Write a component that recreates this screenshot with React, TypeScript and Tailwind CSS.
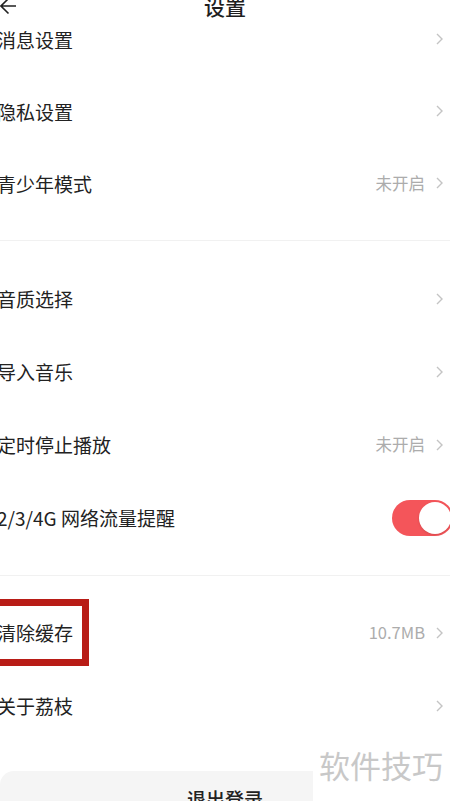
import React from 'react';

const font = { fontFamily: '"Noto Sans CJK SC", "Noto Sans", sans-serif' };

function Chevron() {
  return (
    <svg width="9" height="14" viewBox="0 0 9 14" className="shrink-0">
      <polyline points="2,2 7,7 2,12" fill="none" stroke="#c4c4c4" strokeWidth="1.4" />
    </svg>
  );
}

function Row({ label, value, h = 'h-[73px]', chevron = true, toggle = false, children }: {
  label: string;
  value?: string;
  h?: string;
  chevron?: boolean;
  toggle?: boolean;
  children?: React.ReactNode;
}) {
  return (
    <div className={`relative flex items-center justify-between ${h}`}>
      <span className="ml-[-3px] text-[19px] leading-none text-[#222]">{label}</span>
      {toggle ? (
        <div className="mr-[-3px] flex h-[36px] w-[61px] items-center justify-end rounded-full bg-[#f4555a] pr-[2px]">
          <div className="h-[32px] w-[32px] rounded-full bg-white shadow-sm" />
        </div>
      ) : (
        <div className="mr-[6px] flex items-center gap-[10px]">
          {value && <span className="text-[16.5px] leading-none text-[#acacac]">{value}</span>}
          {chevron && <Chevron />}
        </div>
      )}
      {children}
    </div>
  );
}

export default function App() {
  return (
    <div className="relative h-[801px] w-full overflow-hidden bg-white" style={font}>
      {/* header */}
      <div className="relative z-10 mb-[-17px] flex h-[20px] items-center justify-center">
        <svg width="18" height="18" viewBox="0 0 18 18" className="absolute left-0 top-[-2px]">
          <path d="M16 8H1M8.5 0.5L1 8l7.5 7.5" fill="none" stroke="#222" strokeWidth="1.6" />
        </svg>
        <span className="mt-[-7px] text-[21px] font-medium leading-none text-[#1f1f1f]">设置</span>
      </div>

      <div className="flex flex-col">
        <Row label="消息设置" h="h-[72px]" />
        <Row label="隐私设置" h="h-[72px]" />
        <Row label="青少年模式" value="未开启" h="h-[72px]" />
      </div>

      <div className="mt-[21px] h-px bg-[#f1f1f1]" />

      <div className="mt-[21px] flex flex-col">
        <Row label="音质选择" />
        <Row label="导入音乐" />
        <Row label="定时停止播放" value="未开启" />
        <Row label="2/3/4G 网络流量提醒" toggle />
      </div>

      <div className="mt-[21px] h-px bg-[#f1f1f1]" />

      <div className="mt-[20px] flex flex-col">
        <Row label="清除缓存" value="10.7MB">
          <div className="absolute left-[-12px] top-[3px] h-[67px] w-[101px] border-[7px] border-[#b81c16]" />
        </Row>
        <Row label="关于荔枝" />
      </div>

      <div className="mt-[29px] flex h-[56px] items-center justify-center rounded-[14px] bg-[#f5f5f5]">
        <span className="text-[19px] font-medium text-[#222]">退出登录</span>
      </div>

      {/* watermark */}
      <div className="absolute bottom-0 left-[313px] right-0 top-[742px] bg-white pl-[6px]">
        <span className="text-[31px] leading-[46px] text-[#c8c8c8]">软件技巧</span>
      </div>
    </div>
  );
}
